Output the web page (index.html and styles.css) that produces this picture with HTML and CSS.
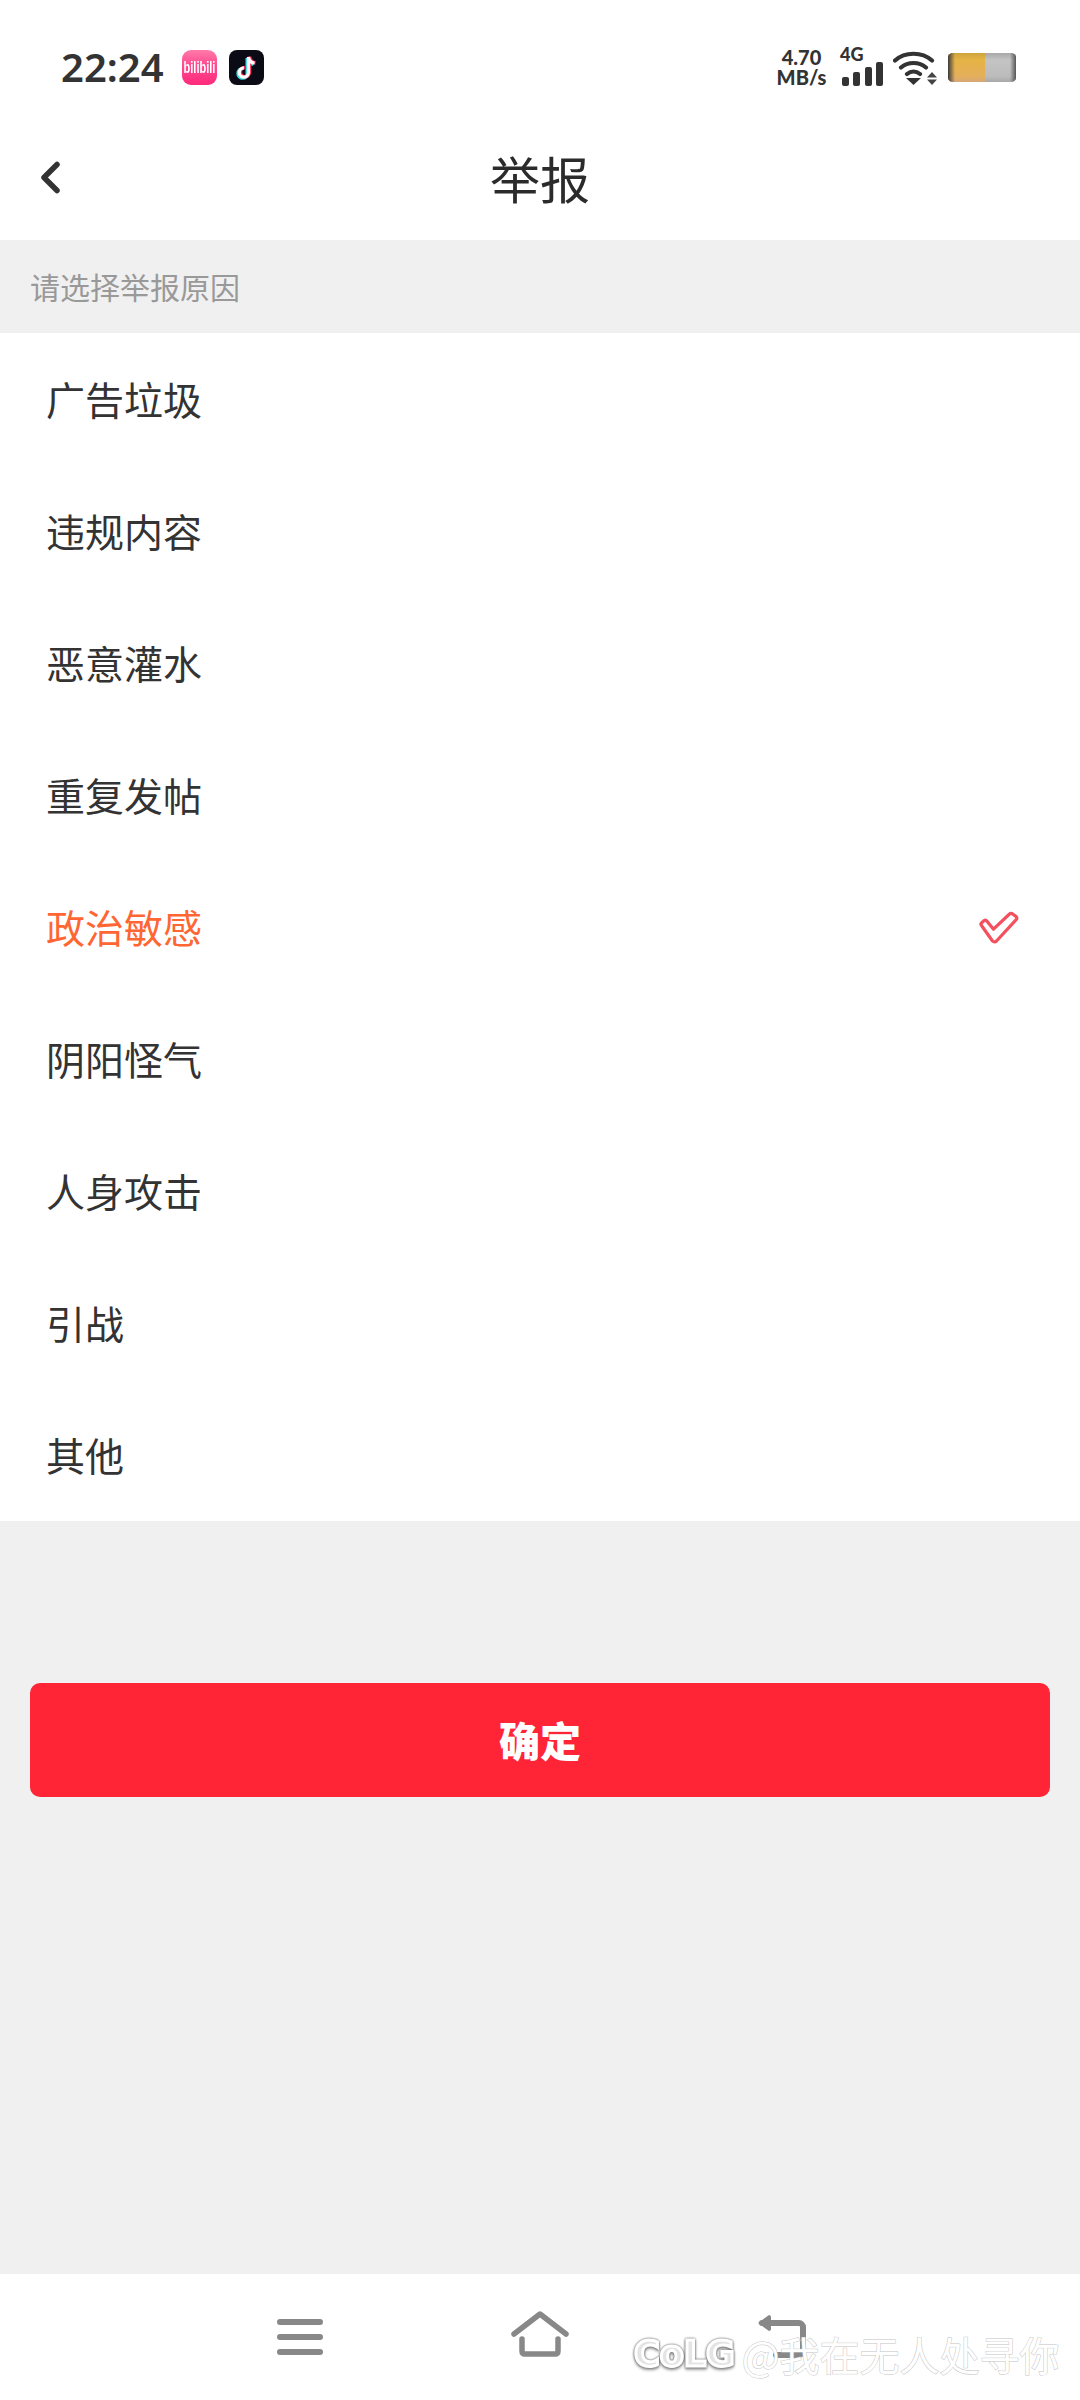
FILE: index.html
```html
<!DOCTYPE html>
<html lang="zh-CN">
<head>
    <meta charset="UTF-8">
    <meta name="viewport" content="width=device-width, initial-scale=1.0">
    <title>举报</title>
    <link rel="stylesheet" href="styles.css">
</head>
<body>
    <div class="status-bar">
        <span class="time">22:24</span>
        <span class="app-icon app-bili"><span class="bili-text">bilibili</span></span>
        <svg class="app-icon app-tiktok" viewBox="0 0 35 35">
            <rect width="35" height="35" rx="8" fill="#0b0b16"/>
            <path d="M19.500 7v15.500a4.600 4.600 0 1 1-4.600-4.600M19.500 7c.4 3.600 2.600 5.800 6 6.200" fill="none" stroke="#36dfe6" stroke-width="3.600" transform="translate(-1.200 .9)"/>
            <path d="M19.500 7v15.500a4.600 4.600 0 1 1-4.600-4.600M19.500 7c.4 3.600 2.600 5.800 6 6.200" fill="none" stroke="#fe2c55" stroke-width="3.600" transform="translate(1 -.4)"/>
            <path d="M19.500 7v15.500a4.600 4.600 0 1 1-4.600-4.600M19.500 7c.4 3.600 2.600 5.800 6 6.200" fill="none" stroke="#fff" stroke-width="3.200"/>
        </svg>
        <div class="status-right">
            <div class="speed"><span>4.70</span><span>MB/s</span></div>
            <div class="signal">
                <span class="signal-label">4G</span>
                <svg class="signal-bars" viewBox="0 0 41 24">
                    <rect x="0" y="15" width="7" height="9" rx="2"/>
                    <rect x="11" y="10" width="7" height="14" rx="2"/>
                    <rect x="23" y="5" width="7" height="19" rx="2"/>
                    <rect x="34" y="0" width="7" height="24" rx="2"/>
                </svg>
            </div>
            <svg class="wifi" viewBox="0 0 45 37">
                <path d="M2 11.500C12 2.500 29 2.500 39 11.500M8 18.500C15 12.500 26 12.500 33 18.500M14 25C18 21.700 23 21.700 27 25" fill="none" stroke="#333" stroke-width="4.200" stroke-linecap="round"/>
                <path d="M13 29h15l-7.500 7z" fill="#333"/>
                <path d="M34 28.500h10l-5-5.500zM34 30.500h10l-5 5.500z" fill="#444"/>
            </svg>
            <div class="battery"><div class="battery-fill"></div></div>
        </div>
    </div>

    <div class="title-bar">
        <svg class="back" viewBox="0 0 20 33">
            <path d="M17 3.500L4 16.500l13 13" fill="none" stroke="#333" stroke-width="5.500" stroke-linecap="round" stroke-linejoin="round"/>
        </svg>
        <h1>举报</h1>
    </div>

    <div class="hint">请选择举报原因</div>

    <ul class="reasons">
        <li>广告垃圾</li>
        <li>违规内容</li>
        <li>恶意灌水</li>
        <li>重复发帖</li>
        <li class="active">政治敏感
            <svg class="check" viewBox="0 0 42 34">
                <path d="M3.500 14.500c-.8-1-.6-2.300.4-3.100l2-1.600c1-.8 2.300-.6 3.100.4l6.500 8L31.500 3c.9-.9 2.200-.9 3.100 0l3.600 2.600c.9.900.9 2.200 0 3.100L18.500 30c-1.200 1.200-2.900 1.200-4 0z" fill="#fff" stroke="#f4515f" stroke-width="3.200" stroke-linejoin="round"/>
            </svg>
        </li>
        <li>阴阳怪气</li>
        <li>人身攻击</li>
        <li>引战</li>
        <li>其他</li>
    </ul>

    <div class="footer">
        <button class="confirm">确定</button>
    </div>

    <div class="nav-bar">
        <svg class="nav-menu" viewBox="0 0 46 36">
            <path d="M3 3h40M3 18h40M3 33h40" fill="none" stroke="#888" stroke-width="6" stroke-linecap="round"/>
        </svg>
        <svg class="nav-home" viewBox="0 0 58 46">
            <path d="M3 23L29 3l26 20" fill="none" stroke="#888" stroke-width="5.500" stroke-linecap="round" stroke-linejoin="round"/>
            <path d="M11 28v12c0 2 1 3 3 3h30c2 0 3-1 3-3V28" fill="none" stroke="#888" stroke-width="5.500" stroke-linecap="round"/>
        </svg>
        <svg class="nav-back" viewBox="0 0 50 44">
            <path d="M6 9h37c2 0 4 2 4 4v24c0 2-2 4-4 4H20" fill="none" stroke="#888" stroke-width="6" stroke-linecap="round"/>
            <path d="M2 9l11-8c1 0 2 1 2 2v12c0 1-1 2-2 2z" fill="#888"/>
        </svg>
        <div class="watermark"><span class="wm-logo">CoLG</span><span class="wm-name">@我在无人处寻你</span></div>
    </div>
</body>
</html>
```

FILE: styles.css
```css
* {
    box-sizing: border-box;
}
body {
    margin: 0;
    width: 1080px;
    height: 2400px;
    display: flex;
    flex-direction: column;
    background-color: #f0f0f0;
    color: #333;
    font-family: "Noto Sans CJK SC", "Noto Sans", sans-serif;
    overflow: hidden;
}

/* status bar */
.status-bar {
    height: 120px;
    padding: 14px 64px 0 61px;
    display: flex;
    align-items: center;
    background: #fff;
}
.time {
    font-family: "Noto Sans", sans-serif;
    font-size: 40px;
    font-weight: 600;
    line-height: 1;
    color: #333;
    width: 121px;
}
.app-icon {
    width: 35px;
    height: 35px;
    flex: none;
}
.app-bili {
    display: flex;
    align-items: center;
    justify-content: center;
    border-radius: 9px;
    background: linear-gradient(#ff7aa8, #ff4a8f 45%, #fd2a7c);
    overflow: hidden;
}
.bili-text {
    font-family: "Liberation Sans", sans-serif;
    font-size: 10px;
    font-weight: 700;
    color: #fff;
    transform: scale(1.1, 1.6);
}
.app-tiktok {
    margin-left: 12px;
}
.status-right {
    margin-left: auto;
    display: flex;
    align-items: center;
}
.speed {
    width: 47px;
    height: 37px;
    display: flex;
    flex-direction: column;
    justify-content: space-between;
    align-items: center;
    font-family: "Lato", sans-serif;
    font-size: 20px;
    font-weight: 900;
    line-height: 17px;
    color: #333;
    white-space: nowrap;
}
.signal {
    width: 41px;
    height: 37px;
    margin-left: 17px;
    position: relative;
}
.signal-label {
    position: absolute;
    top: -4px;
    left: -2px;
    font-family: "Lato", sans-serif;
    font-size: 18px;
    font-weight: 900;
    line-height: 18px;
}
.signal-bars {
    position: absolute;
    left: 0;
    bottom: 0;
    width: 41px;
    height: 24px;
    fill: #333;
}
.wifi {
    width: 45px;
    height: 37px;
    margin-left: 10px;
}
.battery {
    width: 68px;
    height: 29px;
    margin-left: 10px;
    border-radius: 5px / 4px;
    overflow: hidden;
    position: relative;
    background: linear-gradient(#a8a8a8, #c4c4c4 25%, #bcbcbc 80%, #a9a9a9);
}
.battery::after {
    content: "";
    position: absolute;
    inset: 0;
    background: linear-gradient(90deg, #3a3a3a, rgba(60, 60, 60, 0) 7px, rgba(60, 60, 60, 0) 62px, #555);
}
.battery-fill {
    width: 37px;
    height: 100%;
    background: linear-gradient(#cda53e, #e6b345 25%, #e3af5c 80%, #d8a878);
}

/* title */
.title-bar {
    height: 120px;
    padding: 0 40px 6px;
    display: grid;
    grid-template-columns: 1fr auto 1fr;
    align-items: center;
    background: #fff;
}
.back {
    width: 20px;
    height: 33px;
}
.title-bar h1 {
    margin: 0;
    font-size: 50px;
    font-weight: 400;
    line-height: 1.2;
    color: #2b2b2b;
}

.hint {
    height: 93px;
    padding: 0 0 2px 30px;
    display: flex;
    align-items: center;
    font-size: 30px;
    color: #999;
}

/* reason list */
.reasons {
    list-style: none;
    margin: 0;
    padding: 0;
    background: #fff;
}
.reasons li {
    height: 132px;
    padding: 0 60px 2px 46px;
    display: flex;
    align-items: center;
    justify-content: space-between;
    font-size: 39px;
    color: #333;
}
.reasons li.active {
    color: #ff6633;
}
.check {
    width: 42px;
    height: 34px;
    margin-top: 3px;
}

.footer {
    flex: 1;
    padding: 162px 30px 0;
}
.confirm {
    width: 100%;
    height: 114px;
    padding: 0 0 2px;
    border: 0;
    border-radius: 10px;
    background: #ff2536;
    color: #fff;
    font-family: inherit;
    font-size: 41px;
    font-weight: 900;
}

/* bottom nav */
.nav-bar {
    height: 126px;
    padding: 37px 0 0 277px;
    display: flex;
    align-items: flex-start;
    background: #fff;
    position: relative;
}
.nav-menu {
    width: 46px;
    height: 36px;
    margin-top: 8px;
}
.nav-home {
    width: 58px;
    height: 46px;
    margin-left: 188px;
}
.nav-back {
    width: 50px;
    height: 44px;
    margin-left: 187px;
    margin-top: 3px;
}
.watermark {
    position: absolute;
    left: 634px;
    top: 51px;
    display: flex;
    align-items: center;
    white-space: nowrap;
    color: #fff;
}
.wm-logo {
    font-family: "DejaVu Sans", sans-serif;
    font-size: 35px;
    font-weight: 700;
    color: #e4e4e4;
    -webkit-text-stroke: 3px #fff;
    filter: drop-shadow(0 0 1px #555) drop-shadow(0 2px 1px #aaa);
}
.wm-name {
    margin-left: 7px;
    font-size: 40px;
    -webkit-text-stroke: 1px #c4c4c4;
    paint-order: stroke fill;
}
```
